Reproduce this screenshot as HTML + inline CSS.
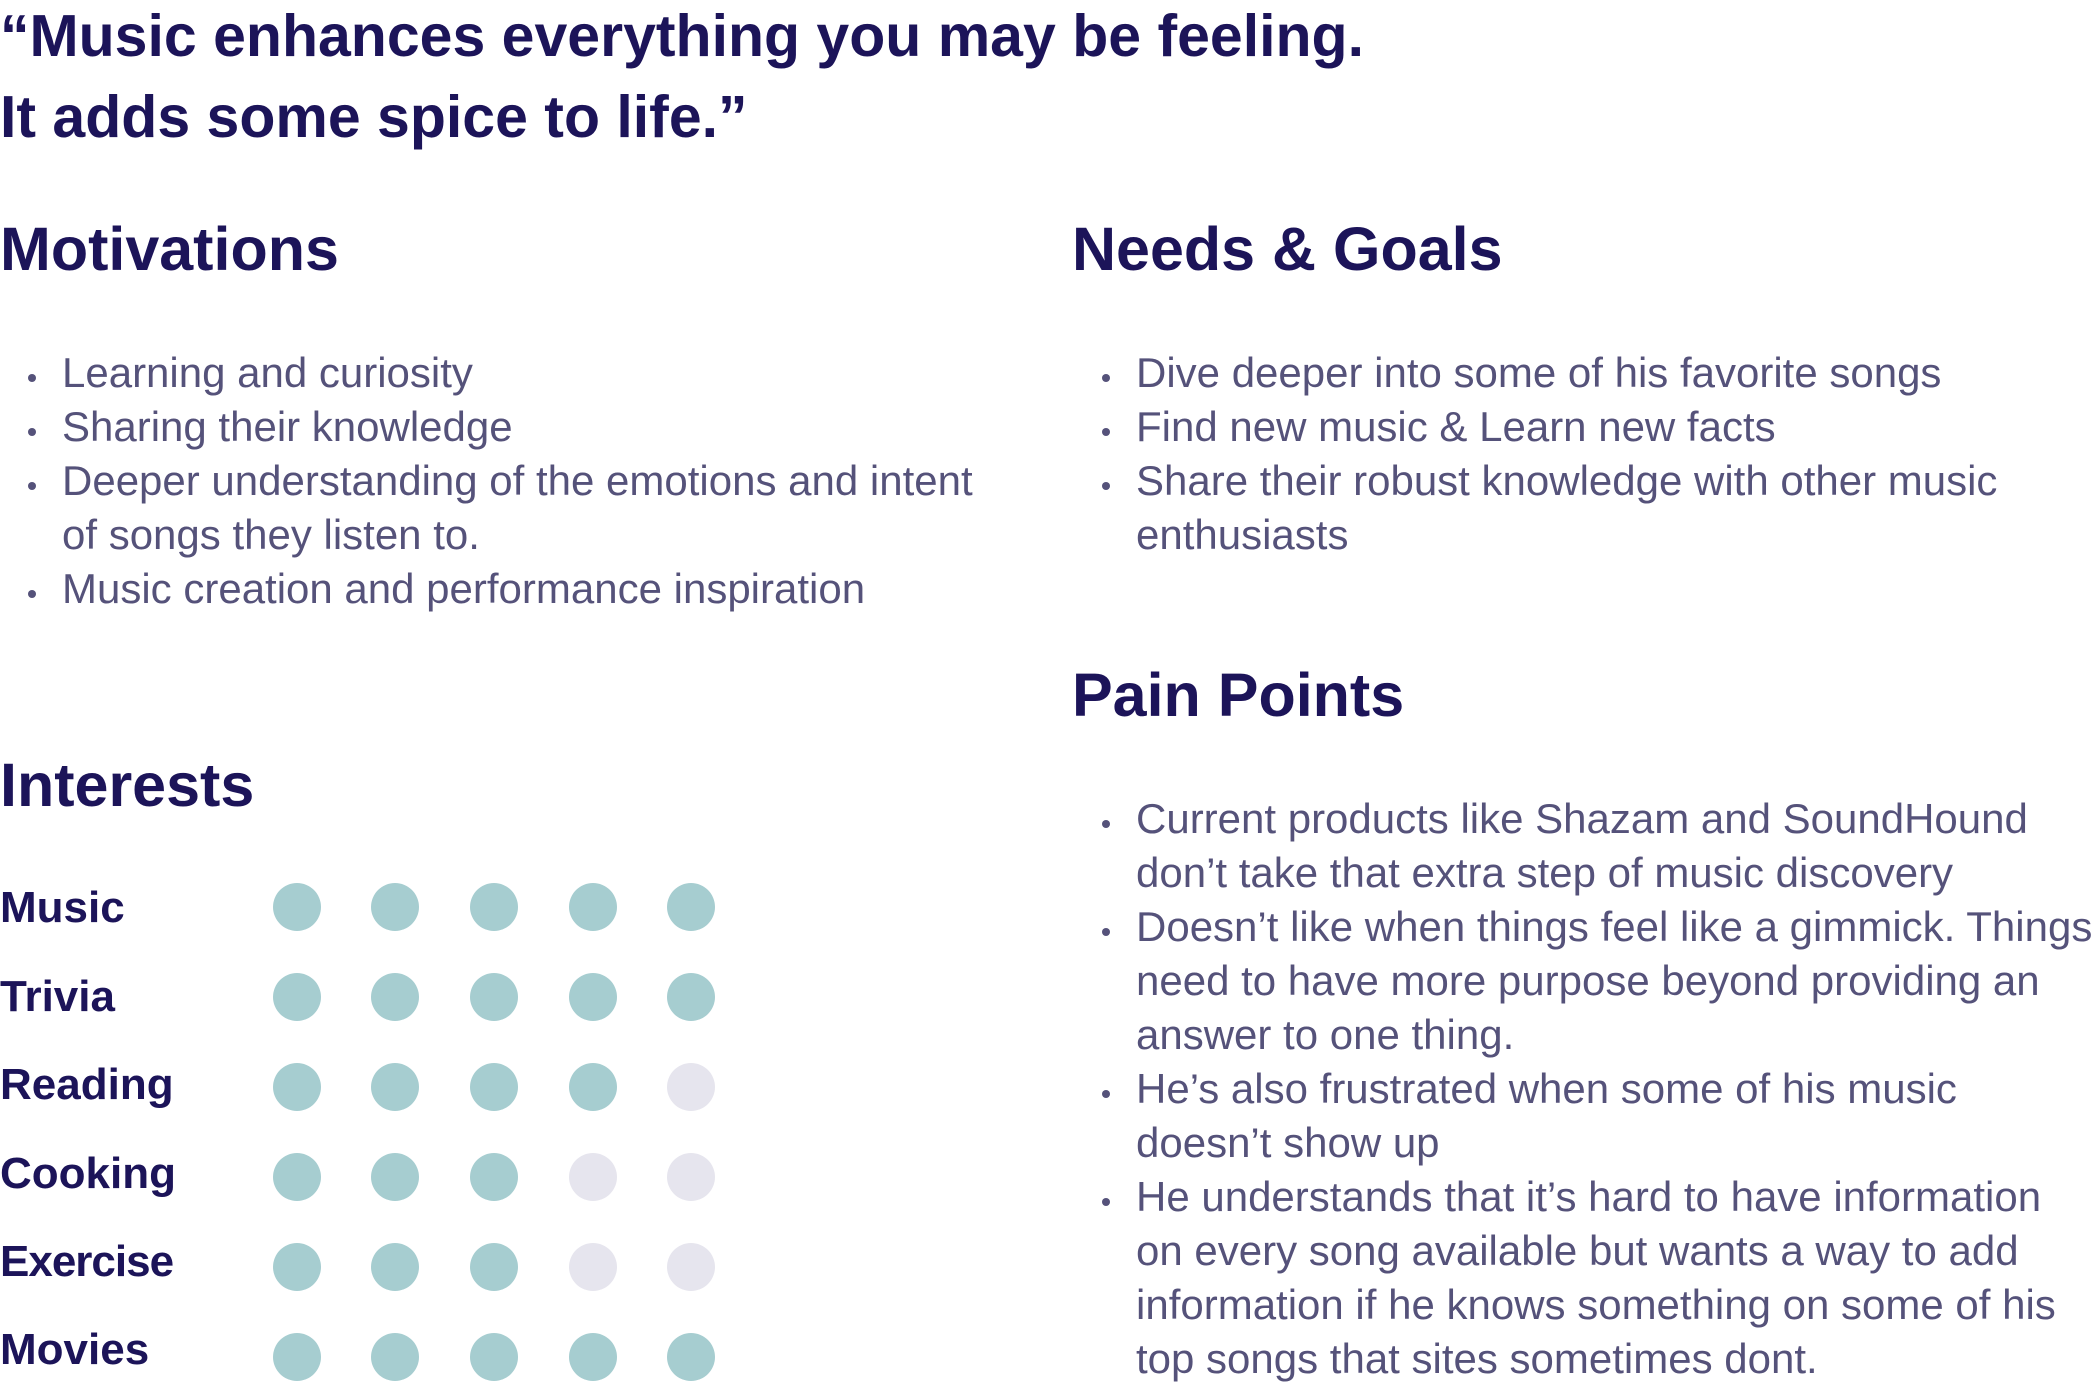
<!DOCTYPE html>
<html><head><meta charset="utf-8"><style>
html,body{margin:0;padding:0;background:#fff;}
body{width:2096px;height:1384px;position:relative;overflow:hidden;font-family:"Liberation Sans",sans-serif;}
.q{position:absolute;left:0;font-weight:bold;font-size:59px;line-height:59px;color:#1c1459;white-space:nowrap;}
.h{position:absolute;font-weight:bold;font-size:61px;line-height:61px;color:#1c1459;white-space:nowrap;}
.list{position:absolute;font-size:42px;line-height:54px;color:#55527a;white-space:nowrap;}
.list div{position:relative;}
.list .b::before{content:"";position:absolute;left:-34px;top:28px;width:8px;height:8px;border-radius:50%;background:#55527a;}
.lab{position:absolute;left:0;font-weight:bold;font-size:44px;line-height:44px;color:#1c1459;}
.d{position:absolute;width:48px;height:48px;border-radius:50%;background:#a6cdd0;}
.d.o{background:#e6e5ee;}
</style></head><body>
<div class="q" style="top:7px">“Music enhances everything you may be feeling.</div>
<div class="q" style="top:88px">It adds some spice to life.”</div>

<div class="h" style="left:0;top:219px">Motivations</div>
<div class="h" style="left:1072px;top:219px">Needs &amp; Goals</div>
<div class="h" style="left:1072px;top:665px">Pain Points</div>
<div class="h" style="left:0;top:755px">Interests</div>

<div class="list" style="left:62px;top:346px">
<div class="b">Learning and curiosity</div>
<div class="b">Sharing their knowledge</div>
<div class="b">Deeper understanding of the emotions and intent</div>
<div>of songs they listen to.</div>
<div class="b">Music creation and performance inspiration</div>
</div>

<div class="list" style="left:1136px;top:346px">
<div class="b">Dive deeper into some of his favorite songs</div>
<div class="b">Find new music &amp; Learn new facts</div>
<div class="b">Share their robust knowledge with other music</div>
<div>enthusiasts</div>
</div>

<div class="list" style="left:1136px;top:792px">
<div class="b">Current products like Shazam and SoundHound</div>
<div>don’t take that extra step of music discovery</div>
<div class="b">Doesn’t like when things feel like a gimmick. Things</div>
<div>need to have more purpose beyond providing an</div>
<div>answer to one thing.</div>
<div class="b">He’s also frustrated when some of his music</div>
<div>doesn’t show up</div>
<div class="b">He understands that it’s hard to have information</div>
<div>on every song available but wants a way to add</div>
<div>information if he knows something on some of his</div>
<div>top songs that sites sometimes dont.</div>
</div>

<div class="lab" style="top:886px">Music</div>
<div class="lab" style="top:975px">Trivia</div>
<div class="lab" style="top:1063px">Reading</div>
<div class="lab" style="top:1152px">Cooking</div>
<div class="lab" style="top:1240px;letter-spacing:-1px">Exercise</div>
<div class="lab" style="top:1328px">Movies</div>

<div class="d" style="left:273px;top:883px"></div><div class="d" style="left:371px;top:883px"></div><div class="d" style="left:470px;top:883px"></div><div class="d" style="left:569px;top:883px"></div><div class="d" style="left:667px;top:883px"></div>
<div class="d" style="left:273px;top:973px"></div><div class="d" style="left:371px;top:973px"></div><div class="d" style="left:470px;top:973px"></div><div class="d" style="left:569px;top:973px"></div><div class="d" style="left:667px;top:973px"></div>
<div class="d" style="left:273px;top:1063px"></div><div class="d" style="left:371px;top:1063px"></div><div class="d" style="left:470px;top:1063px"></div><div class="d" style="left:569px;top:1063px"></div><div class="d o" style="left:667px;top:1063px"></div>
<div class="d" style="left:273px;top:1153px"></div><div class="d" style="left:371px;top:1153px"></div><div class="d" style="left:470px;top:1153px"></div><div class="d o" style="left:569px;top:1153px"></div><div class="d o" style="left:667px;top:1153px"></div>
<div class="d" style="left:273px;top:1243px"></div><div class="d" style="left:371px;top:1243px"></div><div class="d" style="left:470px;top:1243px"></div><div class="d o" style="left:569px;top:1243px"></div><div class="d o" style="left:667px;top:1243px"></div>
<div class="d" style="left:273px;top:1333px"></div><div class="d" style="left:371px;top:1333px"></div><div class="d" style="left:470px;top:1333px"></div><div class="d" style="left:569px;top:1333px"></div><div class="d" style="left:667px;top:1333px"></div>
</body></html>
